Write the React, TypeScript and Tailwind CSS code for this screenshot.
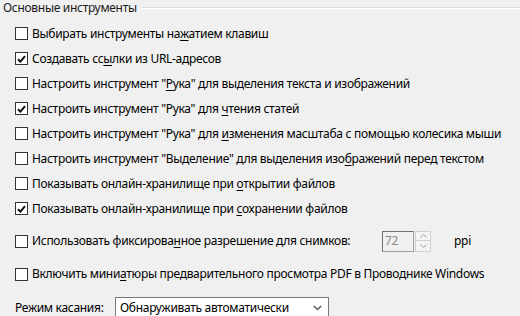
import React from 'react';

type Opt = { pre: string; key: string; post: string; checked: boolean };

const OPTIONS: Opt[] = [
  { pre: 'Выбирать инструменты на', key: 'ж', post: 'атием клавиш', checked: false },
  { pre: 'Создавать сс', key: 'ы', post: 'лки из URL-адресов', checked: true },
  { pre: 'Настроить инструмент "', key: 'Р', post: 'ука" для выделения текста и изображений', checked: false },
  { pre: 'Настроить инструмент "Рука" для ', key: 'ч', post: 'тения статей', checked: true },
  { pre: 'Настроить инструмент "Рука" для ', key: 'и', post: 'зменения масштаба с помощью колесика мыши', checked: false },
  { pre: 'Настроить инструмент "Выделение" для выделения изо', key: 'б', post: 'ражений перед текстом', checked: false },
  { pre: 'Показывать онлайн-хранилище при ', key: 'о', post: 'ткрытии файлов', checked: false },
  { pre: 'Показывать онлайн-хранилище при ', key: 'с', post: 'охранении файлов', checked: true },
];

const Check = ({ checked }: { checked: boolean }) => (
  <span className="w-[13px] h-[13px] border border-[#333333] bg-white flex items-center justify-center shrink-0">
    {checked && (
      <svg width="9" height="8" viewBox="0 0 9 8">
        <path d="M1 4.2 L3.4 6.6 L8 1.2" fill="none" stroke="#111" strokeWidth="2" />
      </svg>
    )}
  </span>
);

const Label = ({ o }: { o: Opt }) => (
  <span className="whitespace-nowrap">
    {o.pre}
    <span className="underline underline-offset-2">{o.key}</span>
    {o.post}
  </span>
);

export default function App() {
  return (
    <div
      className="w-[520px] h-[316px] overflow-hidden bg-[#f0f0f0] text-[12px] tracking-[-0.3px] text-[#000] leading-none"
      style={{ fontFamily: '"Noto Sans", "Open Sans", sans-serif' }}
    >
      <div className="flex items-center h-[15px] pl-[3px]">
        <span className="text-[#1a1a1a] whitespace-nowrap">Основные инструменты</span>
        <div className="flex-1 ml-[4px] h-[2px] border-t border-[#d5dfe5] border-b-white border-b" />
      </div>
      <div className="h-[6px]" />
      {OPTIONS.map((o, i) => (
        <div key={i} className="flex items-center h-[25px] pl-[15px] gap-[4px]">
          <Check checked={o.checked} />
          <Label o={o} />
        </div>
      ))}
      <div className="flex items-center h-[7px]" />
      <div className="flex items-center h-[26px] pl-[15px]">
        <Check checked={false} />
        <span className="ml-[4px] w-[350px] whitespace-nowrap">
          Использовать фиксирова<span className="underline underline-offset-2">н</span>ное разрешение для снимков:
        </span>
        <div className="flex items-center">
          <div className="w-[32px] h-[21px] border border-[#a0a0a0] border-t-[#707070] border-l-[#707070] bg-[#f0f0f0] text-[#8a8a8a] pl-[2px] flex items-center">
            72
          </div>
          <div className="flex flex-col ml-[1px]">
            <div className="w-[16px] h-[10px] border border-[#cfcfcf] bg-[#f4f4f4] flex items-center justify-center">
              <svg width="7" height="4" viewBox="0 0 7 4"><path d="M0.5 3.5 L3.5 0.5 L6.5 3.5" fill="none" stroke="#9a9a9a" /></svg>
            </div>
            <div className="w-[16px] h-[11px] border border-[#cfcfcf] border-t-0 bg-[#f4f4f4] flex items-center justify-center">
              <svg width="7" height="4" viewBox="0 0 7 4"><path d="M0.5 0.5 L3.5 3.5 L6.5 0.5" fill="none" stroke="#9a9a9a" /></svg>
            </div>
          </div>
          <span className="ml-[23px]">ppi</span>
        </div>
      </div>
      <div className="h-[7px]" />
      <div className="flex items-center h-[26px] pl-[15px] gap-[4px]">
        <Check checked={false} />
        <span className="whitespace-nowrap">
          Включить мини<span className="underline underline-offset-2">а</span>тюры предварительного просмотра PDF в Проводнике Windows
        </span>
      </div>
      <div className="h-[10px]" />
      <div className="flex items-center pl-[15px]">
        <span className="w-[100px] whitespace-nowrap">Режим касания:</span>
        <div className="w-[214px] h-[22px] border border-[#7a7a7a] bg-white flex items-center pl-[4px] pr-[6px] justify-between">
          <span className="whitespace-nowrap">Обнаруживать автоматически</span>
          <svg width="9" height="6" viewBox="0 0 9 6"><path d="M0.8 1 L4.5 4.6 L8.2 1" fill="none" stroke="#555" strokeWidth="1.4" /></svg>
        </div>
      </div>
    </div>
  );
}
